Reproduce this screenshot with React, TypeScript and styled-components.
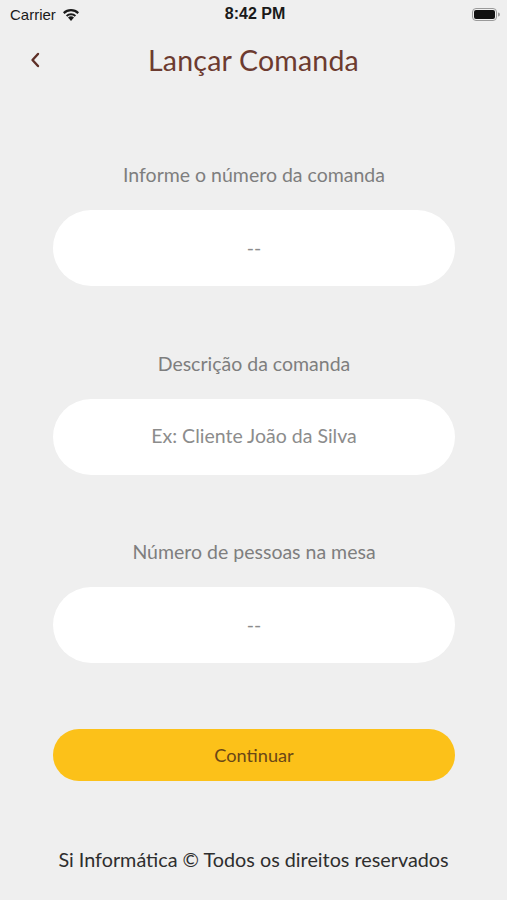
import React from "react";
import styled, { createGlobalStyle } from "styled-components";

const GlobalStyle = createGlobalStyle`
  body {
    margin: 0;
    background: #efefef;
    font-family: "Lato", "Noto Sans", sans-serif;
  }
`;

const Screen = styled.div`
  width: 507px;
  min-height: 900px;
  display: flex;
  flex-direction: column;
  background: #efefef;
`;

const StatusBar = styled.div`
  height: 28px;
  padding: 0 7px 0 10px;
  display: grid;
  grid-template-columns: 1fr auto 1fr;
  align-items: center;
  font-family: "Liberation Sans", Arial, sans-serif;
  font-size: 15px;
  color: #1a1a1a;

  .left {
    display: flex;
    align-items: center;
    gap: 6px;
  }
  .time {
    font-weight: bold;
    font-size: 16px;
  }
  .right {
    display: flex;
    justify-content: flex-end;
  }
`;

const Header = styled.div`
  height: 64px;
  display: grid;
  grid-template-columns: 1fr auto 1fr;
  align-items: center;
  padding: 0 28px;
`;

const BackButton = styled.button`
  justify-self: start;
  background: none;
  border: none;
  padding: 0;
  width: 14px;
  height: 18px;
  display: flex;
  align-items: center;
  justify-content: center;
`;

const Title = styled.h1`
  margin: 0;
  font-size: 28.5px;
  font-weight: 400;
  color: #6c3b30;
  letter-spacing: 0.2px;
`;

const Form = styled.div`
  padding: 71px 52px 0 53px;
  display: flex;
  flex-direction: column;
  gap: 65.5px;
`;

const Field = styled.div`
  display: flex;
  flex-direction: column;
  gap: 23px;
`;

const Label = styled.div`
  text-align: center;
  font-size: 19.5px;
  line-height: 24px;
  color: #7e7e7e;
`;

const Input = styled.input`
  box-sizing: border-box;
  height: 76px;
  padding: 0 20px 2px;
  border: none;
  border-radius: 38px;
  background: #ffffff;
  text-align: center;
  font-family: inherit;
  font-size: 19.5px;
  color: #333;
  outline: none;

  &::placeholder {
    color: #8c8c8c;
  }
`;

const Button = styled.button<{ $bg: string }>`
  box-sizing: border-box;
  height: 52px;
  padding: 0;
  border: none;
  border-radius: 26px;
  background: ${(p) => p.$bg};
  color: #6a4716;
  font-family: inherit;
  font-size: 18.2px;
`;

const Footer = styled.div`
  margin-top: 66px;
  text-align: center;
  font-size: 19.8px;
  line-height: 24px;
  color: #2e2e2e;
`;

const WifiIcon = () => (
  <svg width="18" height="13" viewBox="0 0 18 13">
    <path d="M9 13 L6 9.6 A4.6 4.6 0 0 1 12 9.6 Z" fill="#1a1a1a" />
    <path d="M3.9 7.3 A7.4 7.4 0 0 1 14.1 7.3 L12.7 8.8 A5.4 5.4 0 0 0 5.3 8.8 Z" fill="#1a1a1a" />
    <path d="M1 4.3 A11.4 11.4 0 0 1 17 4.3 L15.5 5.9 A9.3 9.3 0 0 0 2.5 5.9 Z" fill="#1a1a1a" />
  </svg>
);

const BatteryIcon = () => (
  <svg width="28" height="13" viewBox="0 0 28 13">
    <rect x="0.5" y="0.5" width="24" height="12" rx="3.5" fill="none" stroke="#9a9a9a" />
    <rect x="2" y="2" width="21" height="9" rx="2" fill="#111" />
    <path d="M26 4.5 v4 a1.8 1.8 0 0 0 0 -4 z" fill="#9a9a9a" />
  </svg>
);

const fields = [
  { label: "Informe o número da comanda", placeholder: "--" },
  { label: "Descrição da comanda", placeholder: "Ex: Cliente João da Silva" },
  { label: "Número de pessoas na mesa", placeholder: "--" },
];

export default function App() {
  return (
    <>
      <GlobalStyle />
      <Screen>
        <StatusBar>
          <div className="left">
            Carrier <WifiIcon />
          </div>
          <div className="time">8:42 PM</div>
          <div className="right">
            <BatteryIcon />
          </div>
        </StatusBar>
        <Header>
          <BackButton aria-label="Voltar">
            <svg width="10" height="16" viewBox="0 0 10 16">
              <path
                d="M8 2 L2.5 8 L8 14"
                fill="none"
                stroke="#5e2f27"
                strokeWidth="2.4"
                strokeLinecap="round"
                strokeLinejoin="round"
              />
            </svg>
          </BackButton>
          <Title>Lançar Comanda</Title>
          <span />
        </Header>
        <Form>
          {fields.map((f) => (
            <Field key={f.label}>
              <Label>{f.label}</Label>
              <Input placeholder={f.placeholder} />
            </Field>
          ))}
          <Button $bg="#fcc119">Continuar</Button>
        </Form>
        <Footer>Si Informática © Todos os direitos reservados</Footer>
      </Screen>
    </>
  );
}
